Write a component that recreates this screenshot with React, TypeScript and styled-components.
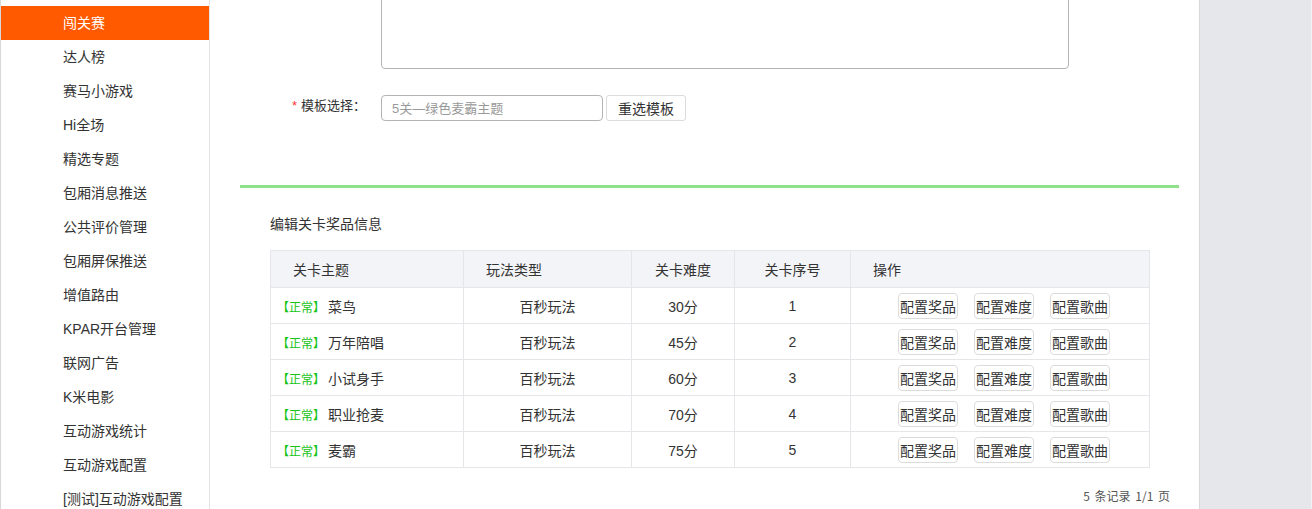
import React from 'react'
import styled, { createGlobalStyle } from 'styled-components'

const GlobalStyle = createGlobalStyle`
  html, body {
    margin: 0;
    padding: 0;
    background: #fff;
  }
  body {
    font-family: "Liberation Sans", "Noto Sans CJK SC", sans-serif;
    color: #333;
    font-size: 14px;
  }
`

const menus = [
  '闯关赛',
  '达人榜',
  '赛马小游戏',
  'Hi全场',
  '精选专题',
  '包厢消息推送',
  '公共评价管理',
  '包厢屏保推送',
  '增值路由',
  'KPAR开台管理',
  '联网广告',
  'K米电影',
  '互动游戏统计',
  '互动游戏配置',
  '[测试]互动游戏配置',
]

const levels = [
  { name: '菜鸟', score: '30分', no: 1 },
  { name: '万年陪唱', score: '45分', no: 2 },
  { name: '小试身手', score: '60分', no: 3 },
  { name: '职业抢麦', score: '70分', no: 4 },
  { name: '麦霸', score: '75分', no: 5 },
]

const App = () => {
  return (
    <>
      <GlobalStyle />
      <Layout>
        <Sidebar>
          {menus.map((m, i) => (
            <MenuItem key={m} active={i === 0}>
              {m}
            </MenuItem>
          ))}
        </Sidebar>
        <Main>
          <FormArea>
            <FormRow>
              <Label />
              <TextArea />
            </FormRow>
            <FormRow>
              <Label>
                <em>*</em>模板选择：
              </Label>
              <Input placeholder="5关—绿色麦霸主题" readOnly />
              <Button>重选模板</Button>
            </FormRow>
          </FormArea>
          <Divider />
          <Section>
            <SectionTitle>编辑关卡奖品信息</SectionTitle>
            <Table>
              <colgroup>
                <col style={{ width: 193 }} />
                <col style={{ width: 168 }} />
                <col style={{ width: 103 }} />
                <col style={{ width: 116 }} />
                <col />
              </colgroup>
              <thead>
                <tr>
                  <Th align="left">关卡主题</Th>
                  <Th align="left">玩法类型</Th>
                  <Th align="center">关卡难度</Th>
                  <Th align="center">关卡序号</Th>
                  <Th align="left">操作</Th>
                </tr>
              </thead>
              <tbody>
                {levels.map(l => (
                  <tr key={l.no}>
                    <Td align="left" className="name">
                      <Status>【正常】</Status>
                      {l.name}
                    </Td>
                    <Td align="center">百秒玩法</Td>
                    <Td align="center">{l.score}</Td>
                    <Td align="center">{l.no}</Td>
                    <Td align="center">
                      <Actions>
                        <SmallButton>配置奖品</SmallButton>
                        <SmallButton>配置难度</SmallButton>
                        <SmallButton>配置歌曲</SmallButton>
                      </Actions>
                    </Td>
                  </tr>
                ))}
              </tbody>
            </Table>
            <Pager>5 条记录 1/1 页</Pager>
          </Section>
        </Main>
        <RightPanel />
      </Layout>
    </>
  )
}

const Layout = styled.div`
  display: grid;
  grid-template-columns: 210px 989px 113px;
  width: 1312px;
  height: 509px;
  overflow: hidden;
`

const Sidebar = styled.div`
  border-left: 1px solid #d8d8d8;
  border-right: 1px solid #e4e4e4;
  padding-top: 6px;
  overflow: hidden;
`

const MenuItem = styled.div<{ active?: boolean }>`
  height: 34px;
  line-height: 34px;
  padding-left: 62px;
  font-size: 14px;
  white-space: nowrap;
  color: ${p => (p.active ? '#fff' : '#333')};
  background: ${p => (p.active ? '#ff5a00' : 'transparent')};
`

const Main = styled.div`
  padding: 0 20px 0 30px;
  overflow: hidden;
`

const FormArea = styled.div`
  margin-top: -31px;
  height: 216px;
  display: flex;
  flex-direction: column;
  gap: 26px;
`

const FormRow = styled.div`
  display: flex;
  align-items: center;
`

const Label = styled.label`
  width: 126px;
  padding-right: 15px;
  padding-bottom: 7px;
  text-align: right;
  font-size: 13px;
  color: #333;
  em {
    font-style: normal;
    color: #f33;
    margin-right: 4px;
  }
`

const TextArea = styled.div`
  width: 686px;
  height: 98px;
  border: 1px solid #b4b4b4;
  border-radius: 4px;
  background: #fff;
`

const Input = styled.input`
  box-sizing: border-box;
  width: 222px;
  height: 26px;
  border: 1px solid #b4b4b4;
  border-radius: 4px;
  padding: 0 10px;
  font-family: inherit;
  font-size: 13px;
  outline: none;
  &::placeholder {
    color: #999;
  }
`

const Button = styled.button`
  box-sizing: border-box;
  margin-left: 3px;
  width: 80px;
  height: 26px;
  border: 1px solid #dcdcdc;
  border-radius: 3px;
  background: #fff;
  font-family: inherit;
  font-size: 14px;
  color: #333;
  padding: 0;
`

const Divider = styled.div`
  height: 3px;
  width: 939px;
  background: #8fe28a;
`

const Section = styled.div`
  padding: 0 29px 0 30px;
`

const SectionTitle = styled.div`
  font-size: 14px;
  line-height: 20px;
  margin-top: 26px;
  margin-bottom: 16px;
`

const Table = styled.table`
  width: 880px;
  border-collapse: collapse;
  table-layout: fixed;
  font-size: 14px;
  .name {
    padding-left: 6px;
  }
`

const Th = styled.th<{ align: 'left' | 'center' }>`
  height: 36px;
  background: #f3f4f8;
  border: 1px solid #e5e6ea;
  font-weight: normal;
  text-align: ${p => p.align};
  padding: 0 0 0 ${p => (p.align === 'left' ? '22px' : '0')};
  color: #333;
`

const Td = styled.td<{ align: 'left' | 'center' }>`
  height: 35px;
  border: 1px solid #e5e6ea;
  text-align: ${p => p.align};
  padding: 0;
  color: #333;
  white-space: nowrap;
`

const Status = styled.span`
  color: #17c317;
  font-size: 12px;
  margin-right: 3px;
`

const Actions = styled.div`
  display: flex;
  justify-content: center;
  gap: 16px;
  padding-left: 8px;
`

const SmallButton = styled.button`
  box-sizing: border-box;
  width: 60px;
  height: 26px;
  padding: 0;
  border: 1px solid #dcdcdc;
  border-radius: 4px;
  background: #fff;
  font-family: inherit;
  font-size: 14px;
  color: #333;
`

const Pager = styled.div`
  width: 900px;
  text-align: right;
  margin-top: 20px;
  font-family: "Noto Sans CJK SC", sans-serif;
  font-size: 12px;
  line-height: 16px;
  color: #555;
  word-spacing: 2px;
`

const RightPanel = styled.div`
  background: #e6e7eb;
  border-left: 1px solid #d8d8dc;
  border-right: 1px solid #f2f2f4;
`

export default App
